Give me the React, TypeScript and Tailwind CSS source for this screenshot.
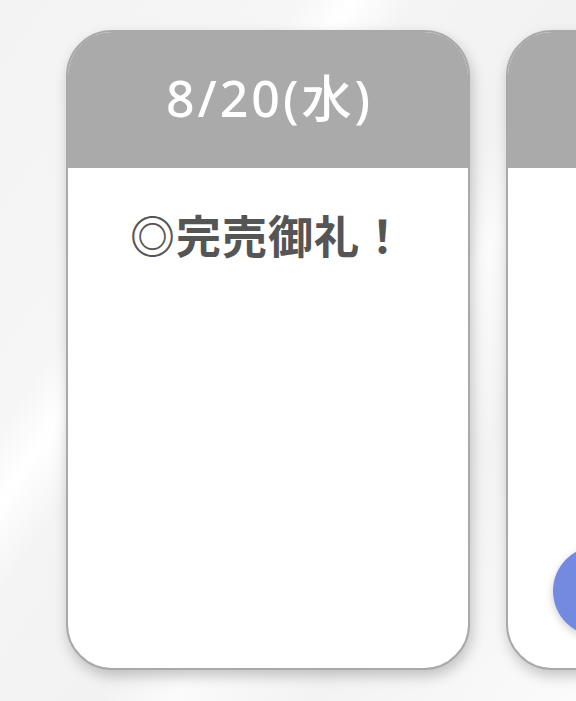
import React from "react";

const days = [
  { date: "8/20(水)", note: "◎完売御礼！" },
  { date: "8/21(木)", note: "◎受付中" },
];

function DayCard({ date, note }: { date: string; note: string }) {
  return (
    <div className="w-[404px] h-[640px] shrink-0 rounded-[46px] border-2 border-[#a9a9a9] bg-white overflow-hidden shadow-[2px_6px_14px_rgba(0,0,0,0.22)] flex flex-col">
      <div className="h-[136px] bg-[#aaaaaa] flex items-center justify-center">
        <span className="text-white text-[50px] leading-none font-medium tracking-[3px] pl-[3px] pb-[4px]">
          {date}
        </span>
      </div>
      <div className="pt-[40px] text-center text-[#555555] text-[45px] font-bold leading-[58px] tracking-[1px]">
        {note}
      </div>
    </div>
  );
}

export default function App() {
  return (
    <div
      className="relative w-[576px] h-[701px] overflow-hidden bg-[linear-gradient(125deg,#f3f3f3_0%,#f6f6f6_28%,#ffffff_33%,#f4f4f4_39%,#f2f2f2_55%,#fbfbfb_62%,#f3f3f3_75%,#fbfbfb_100%)]"
      style={{ fontFamily: '"Noto Sans", "Noto Sans CJK JP", sans-serif' }}
    >
      <div className="flex gap-[36px] pl-[66px] pt-[30px]">
        {days.map((d) => (
          <DayCard key={d.date} date={d.date} note={d.note} />
        ))}
      </div>
      <button className="absolute left-[553px] top-[546px] w-[90px] h-[90px] rounded-full bg-[#7489e0] shadow-[0_3px_8px_rgba(0,0,0,0.2)]" />
    </div>
  );
}
